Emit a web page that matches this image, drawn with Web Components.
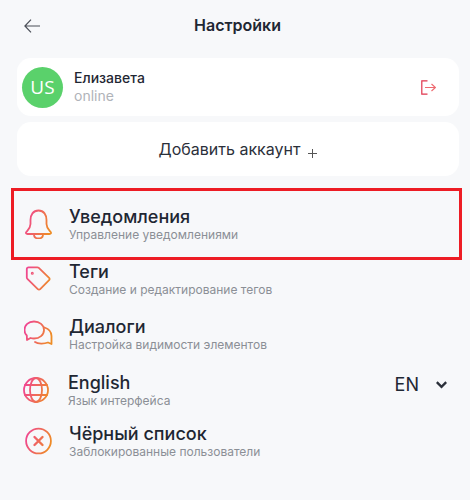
<!DOCTYPE html>
<html lang="ru">
<head>
<meta charset="utf-8">
<title>Настройки</title>
<style>
html, body { margin: 0; padding: 0; background: #f7f8fa; }
body { font-family: Inter, "Liberation Sans", sans-serif; color: #1f2733; }
</style>
</head>
<body>
<settings-page>
  <settings-header title="Настройки"></settings-header>
  <account-card name="Елизавета" status="online" initials="US"></account-card>
  <add-account>Добавить аккаунт</add-account>
  <settings-row icon="bell" heading="Уведомления" sub="Управление уведомлениями"></settings-row>
  <settings-row icon="tag" heading="Теги" sub="Создание и редактирование тегов"></settings-row>
  <settings-row icon="chat" heading="Диалоги" sub="Настройка видимости элементов"></settings-row>
  <settings-row icon="globe" heading="English" sub="Язык интерфейса" lang-value="EN"></settings-row>
  <settings-row icon="block" heading="Чёрный список" sub="Заблокированные пользователи"></settings-row>
</settings-page>

<script>
// all glyphs are drawn in a 30x30 box
const icons = {
  bell: `<path d="M14.500 1.500C9 1.500 6.500 6 6.500 11v4c0 4-2.500 6-4.200 8-.8 1-.3 2 1.200 2h22c1.500 0 2-1 1.200-2-1.700-2-4.200-4-4.200-8v-4c0-5-2.500-9.500-8-9.500Z"/><path d="M10 25.500c0 2.500 2 4 4.500 4s4.500-1.500 4.500-4"/>`,
  tag: `<path d="M2.800 5c0-1 .7-1.700 1.700-1.700h8.800c.6 0 1.100.2 1.500.6l10.300 9.900c.7.700.7 1.700 0 2.400l-8.900 8.900c-.7.700-1.700.7-2.400 0L3.400 14.800c-.4-.4-.6-.9-.6-1.400V5Z"/><circle cx="8.300" cy="9.300" r=".6"/>`,
  chat: `<path d="M10 2.500c5.500 0 10 3.500 10 8.500s-4.500 8.500-10 8.500c-1.500 0-2.500-.2-3.500-.5L3 21l-.2-4.500C1 15 .5 13 .5 11c0-5 4-8.500 9.500-8.500Z"/><path d="M20.500 8.500c4.500 1.500 7 4.500 7 8.500v8l-3.500-1.500c-4 1.500-10 1.500-13-.5"/>`,
  globe: `<circle cx="13" cy="15" r="12"/><ellipse cx="13" cy="15" rx="6" ry="12"/><path d="M2 10h22M2 20h22"/>`,
  block: `<circle cx="14.500" cy="15" r="12.400"/><path d="M10.500 11l8 8M18.500 11l-8 8" stroke-width="2.400"/>`
};

const rowTemplate = document.createElement('template');
rowTemplate.innerHTML = `
<style>
:host {
    display: flex;
    align-items: center;
    box-sizing: border-box;
    height: 55px;
    padding: 0 16px 0 24px;
}
:host([icon="bell"]) {
    height: 72px;
    margin: 12px 8px 0 11px;
    padding: 0 16px 0 10px;
    border: 3px solid #ed1c24;
}
:host([icon="tag"]) { margin-top: -9px; }
:host([icon="globe"]) { height: 56px; }
:host([icon="block"]) { height: 47px; }
.icon { width: 30px; height: 30px; flex: none; margin-right: 15px; display: block; }
:host([icon="globe"]) .icon { margin: 2px 15px 0 -1px; }
:host([icon="globe"]) .text { margin-top: 2px; }
.text { flex: 1; min-width: 0; }
.heading { font-size: 18px; font-weight: 500; line-height: 22px; color: #1f2733; }
.sub { font-size: 12px; line-height: 14px; color: #8b8f96; }
.lang { display: none; align-items: center; gap: 17px; font-size: 18px; line-height: 22px; color: #1f2733; margin: 0 7px 8px 0; }
:host([lang-value]) .lang { display: flex; }
.lang svg { display: block; }
</style>
<svg class="icon" viewBox="0 0 30 30" fill="none" stroke="url(#g)" stroke-width="1.800" stroke-linecap="round" stroke-linejoin="round">
  <defs>
    <linearGradient id="g" gradientUnits="userSpaceOnUse" x1="2" y1="10" x2="27" y2="18">
      <stop offset="0" stop-color="#f0478f"/>
      <stop offset="1" stop-color="#ee8c25"/>
    </linearGradient>
  </defs>
  <g class="glyph"></g>
</svg>
<div class="text">
  <div class="heading"></div>
  <div class="sub"></div>
</div>
<div class="lang">
  <span class="value"></span>
  <svg width="11" height="8" viewBox="0 0 11 8" fill="none" stroke="#2b303a" stroke-width="2.400"><path d="M.8 1.200l4.700 4.600 4.700-4.600"/></svg>
</div>`;

/**
 * One line of the settings list: icon, heading and hint.
 */
class SettingsRow extends HTMLElement {
    connectedCallback() {
        this.attachShadow({mode: 'open'});
        this.shadowRoot.appendChild(rowTemplate.content.cloneNode(true));
        this.shadowRoot.querySelector(".glyph").innerHTML = icons[this.getAttribute("icon")];
        this.shadowRoot.querySelector(".heading").textContent = this.getAttribute("heading");
        this.shadowRoot.querySelector(".sub").textContent = this.getAttribute("sub");
        this.shadowRoot.querySelector(".value").textContent = this.getAttribute("lang-value") || "";
    }
}

class SettingsPage extends HTMLElement {
    constructor() {
        super();
        this.attachShadow({mode: 'open'}).innerHTML = `
<style>
:host { display: block; width: 470px; height: 500px; overflow: hidden; background: #f7f8fa; }
</style>
<slot></slot>`;
    }
}

class SettingsHeader extends HTMLElement {
    connectedCallback() {
        this.attachShadow({mode: 'open'}).innerHTML = `
<style>
:host { display: flex; align-items: center; height: 52px; margin-bottom: 6px; padding: 0 0 0 24px; }
svg { display: block; flex: none; }
h1 { flex: 1; margin: 0 35px 2px 0; text-align: center; font-size: 16px; line-height: 20px; font-weight: 600; color: #1f2733; }
</style>
<svg width="16" height="14" viewBox="0 0 16 14" fill="none" stroke="#4a4e57" stroke-width="1.200"><path d="M16 7H1M7 .7L.9 7 7 13.300"/></svg>
<h1>${this.getAttribute("title")}</h1>`;
    }
}

class AccountCard extends HTMLElement {
    connectedCallback() {
        this.attachShadow({mode: 'open'}).innerHTML = `
<style>
:host { display: flex; align-items: center; box-sizing: border-box; height: 58px; margin: 0 11px 6px 17px; padding: 0 23px 0 5px; background: #fff; border-radius: 14px; }
.avatar { width: 41px; height: 41px; flex: none; border-radius: 50%; background: #5ad16b; color: #fff; display: flex; align-items: center; justify-content: center; font-family: "Open Sans", sans-serif; font-size: 19px; margin-right: 11px; }
.info { flex: 1; }
.name { font-size: 14px; line-height: 18px; font-weight: 500; color: #1f2733; }
.status { font-size: 14px; line-height: 18px; color: #b0b3b9; }
svg { display: block; flex: none; }
</style>
<div class="avatar">${this.getAttribute("initials")}</div>
<div class="info">
  <div class="name">${this.getAttribute("name")}</div>
  <div class="status">${this.getAttribute("status")}</div>
</div>
<svg width="15" height="15" viewBox="0 0 15 15" fill="none" stroke-width="1.200">
  <path d="M6.500 .8H.8v13.400h5.700" stroke="#e0354c"/>
  <path d="M4 7.500h10.500M10.500 4l4 3.500-4 3.500" stroke="#ee6a70"/>
</svg>`;
    }
}

class AddAccount extends HTMLElement {
    constructor() {
        super();
        this.attachShadow({mode: 'open'}).innerHTML = `
<style>
:host { display: flex; align-items: center; justify-content: center; box-sizing: border-box; height: 54px; margin: 0 11px 0 17px; background: #fff; border-radius: 14px; font-size: 16px; color: #2b303a; }
svg { display: block; margin: 8px 0 0 8px; }
</style>
<slot></slot>
<svg width="9" height="9" viewBox="0 0 9 9" fill="none" stroke="#555" stroke-width="1"><path d="M4.500 0v9M0 4.500h9"/></svg>`;
    }
}

customElements.define("settings-page", SettingsPage);
customElements.define("settings-header", SettingsHeader);
customElements.define("account-card", AccountCard);
customElements.define("add-account", AddAccount);
customElements.define("settings-row", SettingsRow);
</script>
</body>
</html>
